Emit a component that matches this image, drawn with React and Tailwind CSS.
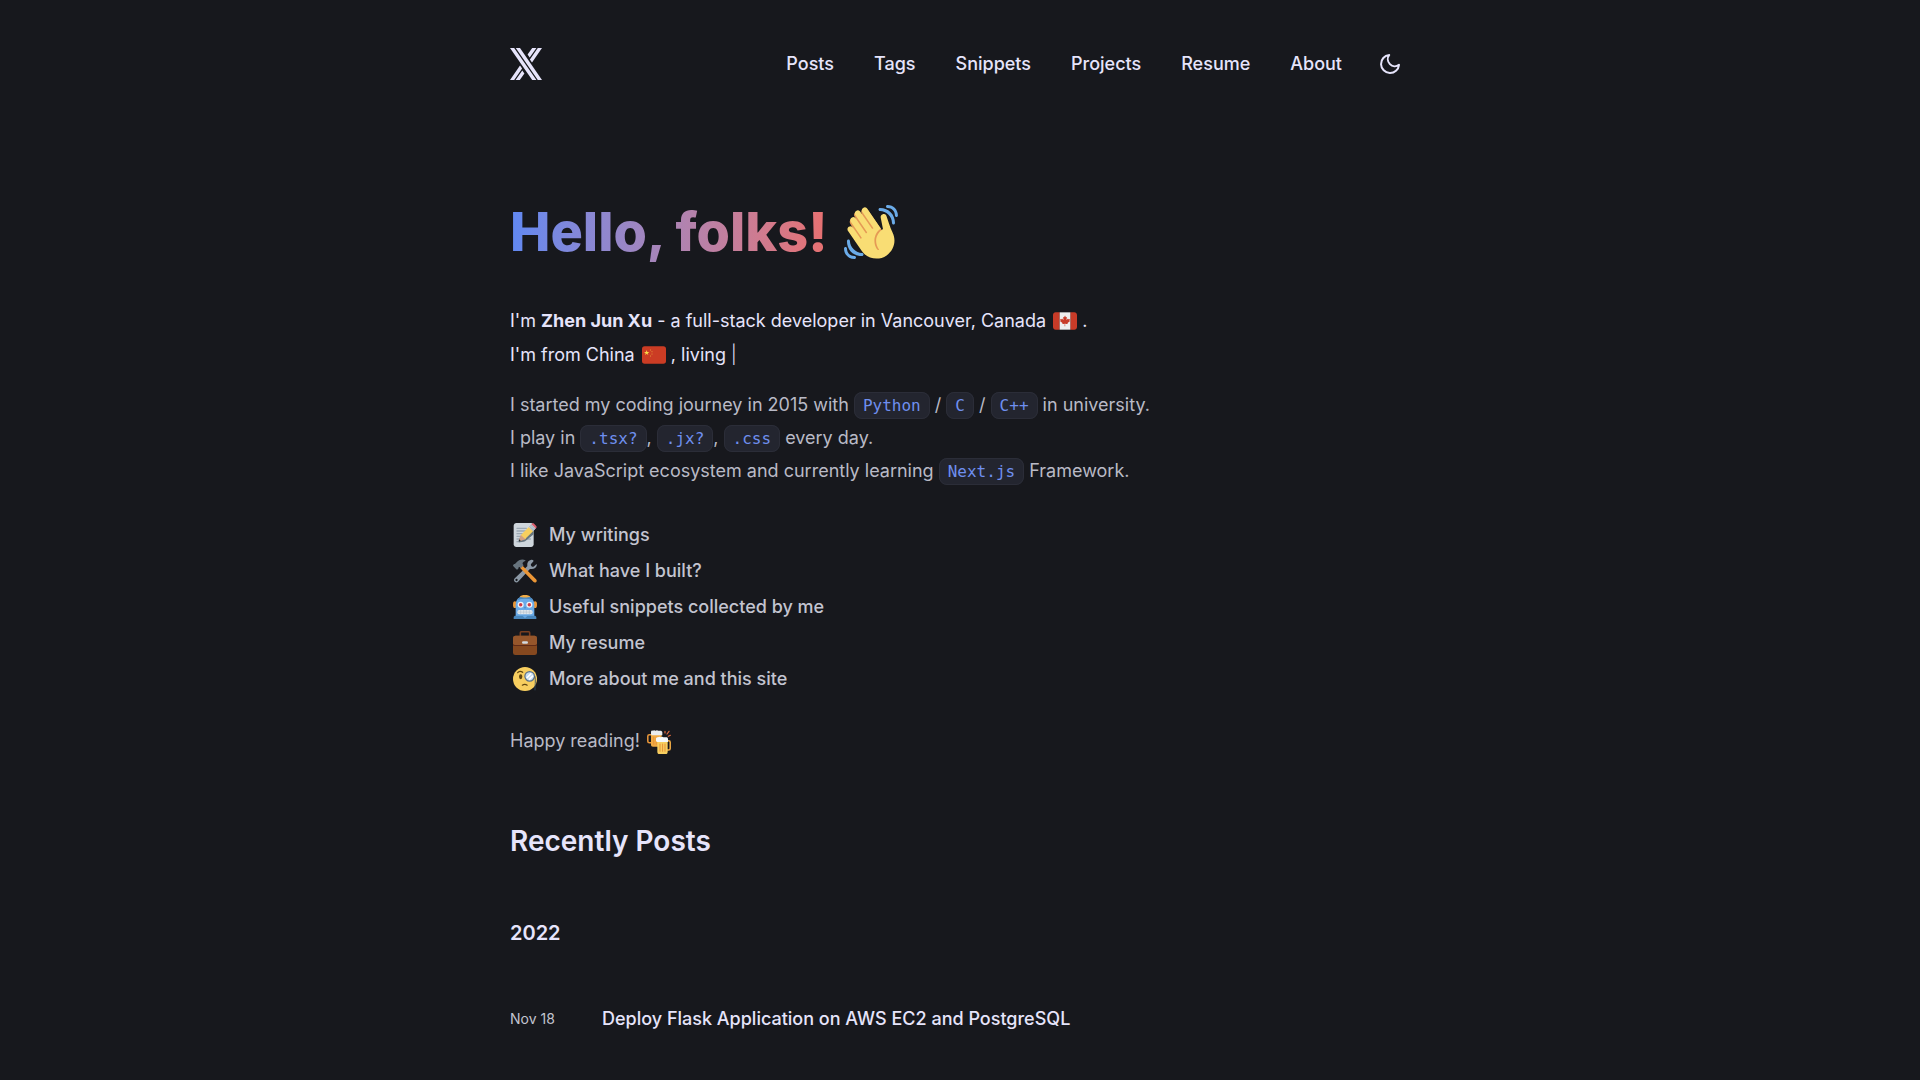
const emojiArt = {
  wave: (
    <>
      <path fill="#E59A55" d="M4.861 9.147c.94-.657 2.357-.531 3.201.166l-.968-1.407c-.779-1.111-.5-2.313.612-3.093 1.112-.777 4.263 1.312 4.263 1.312-.786-1.122-.639-2.544.483-3.331 1.122-.784 2.67-.513 3.456.611l10.292 14.72L25 31l-12.083-4.042L4.25 12.625c-.793-1.129-.519-2.686.611-3.478z" />
      <path fill="#F9DD74" d="M2.695 17.336s-1.132-1.65.519-2.781c1.649-1.131 2.78.518 2.78.518l5.251 7.658c.181-.302.379-.6.6-.894L4.557 11.21s-1.131-1.649.519-2.78c1.649-1.131 2.78.518 2.78.518l6.855 9.997c.255-.208.516-.417.785-.622L7.549 6.732s-1.131-1.649.519-2.78c1.649-1.131 2.78.518 2.78.518l7.947 11.589c.292-.179.581-.334.871-.498L12.238 4.729s-1.131-1.649.518-2.78c1.649-1.131 2.78.518 2.78.518l7.854 11.454 1.194 1.742c-4.948 3.394-5.419 9.779-2.592 13.902.565.825 1.39.26 1.39.26-3.393-4.949-2.357-10.51 2.592-13.903L24.515 8.62s-.545-1.924 1.378-2.47c1.924-.545 2.47 1.379 2.47 1.379l1.685 5.004c.668 1.984 1.379 3.961 2.32 5.831 2.657 5.28 1.07 11.842-3.94 15.279-5.465 3.747-12.936 2.354-16.684-3.11L2.695 17.336z" />
      <g fill="#6BABE8">
        <path d="M12 32.042C8 32.042 3.958 28 3.958 24c0-.553-.405-1-.958-1s-1.042.447-1.042 1C1.958 30 6 34.042 12 34.042c.553 0 1-.489 1-1.042s-.447-.958-1-.958z" />
        <path d="M7 34c-3 0-5-2-5-5 0-.553-.447-1-1-1s-1 .447-1 1c0 4 3 7 7 7 .553 0 1-.447 1-1s-.447-1-1-1zM24 2c-.552 0-1 .448-1 1s.448 1 1 1c4 0 8 3.589 8 8 0 .552.448 1 1 1s1-.448 1-1c0-5.514-4-10-10-10z" />
        <path d="M29 .042c-.552 0-1 .406-1 .958s.448 1.042 1 1.042c3 0 4.958 2.225 4.958 4.958 0 .552.489 1 1.042 1s.958-.448.958-1C35.958 3.163 33 .042 29 .042z" />
      </g>
    </>
  ),
  canada: (
    <>
      <path fill="#C83B28" d="M4 5C1.791 5 0 6.791 0 9v18c0 2.209 1.791 4 4 4h6V5H4zm28 0h-6v26h6c2.209 0 4-1.791 4-4V9c0-2.209-1.791-4-4-4z" />
      <path fill="#EEE" d="M10 5h16v26H10z" />
      <path fill="#C83B28" d="M18.615 22.113c1.198.139 2.272.264 3.469.401l-.305-1.002c-.049-.176.017-.285.126-.371l3.732-3.025-.767-.384c-.307-.153-.223-.291-.112-.702l.565-2.059-2.147.459c-.209.032-.349-.048-.37-.161l-.276-1.005-1.697 1.911c-.241.306-.731.306-.578-.396l.726-3.878-.973.507c-.273.154-.547.181-.7-.094l-1.293-2.457-1.293 2.457c-.154.275-.427.248-.7.094l-.973-.507.726 3.878c.153.702-.337.702-.578.396l-1.697-1.911-.276 1.005c-.021.113-.161.193-.37.161l-2.147-.459.565 2.059c.111.411.195.549-.112.702l-.767.384 3.732 3.025c.109.086.175.195.126.371l-.305 1.002c1.197-.137 2.271-.263 3.469-.401.106 0 .177.06.177.181l-.19 3.76h.95l-.19-3.76c.002-.121.073-.181.179-.181z" />
    </>
  ),
  china: (
    <>
      <rect y="5" width="36" height="26" rx="4" fill="#CB3C24" />
      <path fill="#F8DC49" d="M7 10.5l.95 2.9h3.05l-2.47 1.8.94 2.9L7 16.3l-2.47 1.8.94-2.9L3 13.4h3.05z" />
      <g fill="#F8DC49">
        <circle cx="12.6" cy="10.6" r=".7" />
        <circle cx="15" cy="13" r=".7" />
        <circle cx="15" cy="16.6" r=".7" />
        <circle cx="12.6" cy="19.4" r=".7" />
      </g>
    </>
  ),
  memo: (
    <>
      <path fill="#CFD6DC" d="M31 32c0 2.209-1.791 4-4 4H5c-2.209 0-4-1.791-4-4V4c0-2.209 1.791-4 4-4h22c2.209 0 4 1.791 4 4v28z" />
      <path stroke="#9DA9B4" strokeWidth="2" strokeLinecap="round" d="M6 8h14M6 12h14M6 16h14M6 20h20M6 24h20M6 28h6" />
      <path fill="#66757F" d="M31 6.272c-.827-.535-1.837-.579-2.521-.023l-.792.646-1.484 1.211-.1.08-2.376 1.938-11.878 9.686c-.437.357-.793 1.219-1.173 2.074-.378.85-.969 2.852-1.443 4.391-.148.25-1.065 1.846-.551 2.453.52.615 2.326.01 2.568-.076 1.626-.174 3.731-.373 4.648-.58.924-.211 1.854-.395 2.291-.752.008-.006.01-.018.017-.023l11.858-9.666.792-.646.144-.118V6.272z" />
      <path fill="#D0A086" d="M18.145 22.526s-1.274-1.881-2.117-2.553c-.672-.843-2.549-2.116-2.549-2.116-.448-.446-1.191-.48-1.629-.043-.437.438-.793 1.366-1.173 2.291-.472 1.146-1.276 4.154-1.768 5.752l2.2 1.2c1.598-.493 4.607-1.296 5.752-1.768.924-.381 1.854-.736 2.291-1.174.439-.435.406-1.178-.043-1.627z" />
      <path fill="#DC5F6E" d="M25.312 4.351c-.876.875-.876 2.293 0 3.168l3.167 3.168c.876.874 2.294.874 3.168 0l3.169-3.168c.874-.875.874-2.293 0-3.168l-3.169-3.168c-.874-.875-2.292-.875-3.168 0l-3.167 3.168z" />
      <path fill="#F7CF5F" d="M11.849 17.815l3.17 3.17 3.165 3.166 11.881-11.879-6.337-6.336-11.879 11.879z" />
      <path fill="#292F33" d="M11.298 26.742s-2.06 1.133-2.616.576c-.557-.558.581-2.611.581-2.611s1.951.036 2.035 2.035z" />
      <path fill="#CCD6DD" d="M23.728 5.935l3.96-3.96 6.336 6.337-3.96 3.96z" />
      <path fill="#99AAB5" d="M26.103 3.558l.792-.792 6.336 6.335-.792.792zm-1.583 1.585l.791-.792 6.335 6.335-.791.792z" />
    </>
  ),
  tools: (
    <>
      <path fill="#8C99A6" fillRule="evenodd" d="M27.5 1.2c-3.9.7-6.6 4-6.1 7.8.1.8.2 1.4 0 1.8L2.7 28.8c-1.6 1.6-1.6 3.9 0 5.3 1.5 1.5 3.9 1.4 5.3-.2L25 15.3c.6-.6 1.5-.4 2.5-.3 4 .4 7.5-2.2 8.3-6.1.2-1.2-.6-1.5-1.3-.8l-3.3 3.1c-1 .9-2.3.7-3.4-.3-1.2-1.1-1.4-2.5-.4-3.6l3-3.4c.9-1.1.5-2.9-2.9-2.7zM5.3 29.8a1.7 1.7 0 1 1 0 3.4 1.7 1.7 0 0 1 0-3.4z" />
      <path fill="#EB9636" d="M13.7 9.5l20.9 20.7c1.3 1.3 1.4 3 .2 4.2-1.2 1.2-3.1 1.1-4.3-.2L10.3 13.2z" />
      <path fill="#67747E" d="M18.6 1.7C14.2-.2 9.6.7 6.5 3.8L2.9 7.4c-.5-.2-1.1 0-1.5.4l-.8.8c-.7.7-.7 1.6 0 2.3l4.3 4.3c.7.7 1.6.7 2.3 0l.8-.8c.5-.5.6-1.2.3-1.8.8-.7 1.5-.6 2.2.1l1.1 1.1 4.4-4.4-1-1.2c-1.3-1.5-.8-3.6 3.3-5.2.6-.3.9-1-.1-1.3z" />
    </>
  ),
  robot: (
    <>
      <ellipse cx="2.8" cy="14.5" rx="2.8" ry="5" fill="#EB9636" />
      <ellipse cx="33.2" cy="14.5" rx="2.8" ry="5" fill="#EB9636" />
      <path fill="#6BABE8" d="M4 32V15C4 7 9 1.5 18 1.5S32 7 32 15v17z" />
      <path fill="#4A87BD" d="M6.5 7.5C9 3.5 13 2 18 2s9 1.5 11.5 5.5C22 5 14 5 6.5 7.5zM1 36v-2.5C1 32 2.3 31 4 31h28c1.7 0 3 1 3 2.5V36z" />
      <path fill="#F0AB45" d="M10 2.8C12-.8 24-.8 26 2.8c-4 1.5-12 1.5-16 0z" />
      <circle cx="11.5" cy="14.5" r="4.5" fill="#F1F3F5" />
      <circle cx="24.5" cy="14.5" r="4.5" fill="#F1F3F5" />
      <circle cx="11.5" cy="14.5" r="2.6" fill="#CD3B47" />
      <circle cx="24.5" cy="14.5" r="2.6" fill="#CD3B47" />
      <path fill="#4A87BD" d="M18 17l1.6 3h-3.2z" />
      <rect x="6.5" y="22.5" width="23" height="6.5" rx="3" fill="#E1E8ED" />
      <path stroke="#A9B8C4" strokeWidth=".7" d="M11.5 22.5V29M16 22.5V29M20 22.5V29M24.5 22.5V29M7 25.7h22" />
      <path fill="#6BABE8" d="M14 31h8l-4 3.5z" />
    </>
  ),
  briefcase: (
    <>
      <path fill="none" stroke="#7A3F20" strokeWidth="2.4" strokeLinejoin="round" d="M11 8V2.500C11 1.700 11.700 1.200 12.500 1.200h11c.8 0 1.500.5 1.500 1.300V8" />
      <rect y="7" width="36" height="29" rx="3.5" fill="#85481F" />
      <path fill="#96562B" d="M0 11c0-2.200 1.800-4 4-4h28c2.200 0 4 1.800 4 4v7c0 1.700-1.300 3-3 3H3c-1.700 0-3-1.300-3-3z" />
      <path fill="#5F2A17" d="M0 19.500c1 1.200 2 1.500 3 1.500h30c1 0 2-.3 3-1.500v2.300c-1 .8-2 .8-3 .8H3c-1 0-2 0-3-.8z" />
      <rect x="13.5" y="15.2" width="9" height="4" rx="2" fill="#D3DAE0" />
    </>
  ),
  monocle: (
    <>
      <circle cx="18" cy="18" r="18" fill="#F7CE5F" />
      <ellipse cx="11.5" cy="14.5" rx="2.5" ry="3.7" fill="#614711" />
      <path fill="none" stroke="#614711" strokeWidth="1.8" strokeLinecap="round" d="M7 8.500C9 6 12 6 14.500 8M14 27.300c2.300-1.500 5-1.500 7.300 0" />
      <circle cx="25" cy="14" r="7.2" fill="#C3DCF0" stroke="#5B7085" strokeWidth="1.8" />
      <path stroke="#fff" strokeWidth="2.4" d="M20.500 16.500l7-7M24 19l6-6" />
      <path fill="none" stroke="#34495E" strokeWidth="1.3" d="M33 14c1.200 7-.2 14 0 21" />
    </>
  ),
  beers: (
    <>
      <path fill="none" stroke="#E8963A" strokeWidth="2.3" d="M7 7H3.500C2 7 1.200 7.800 1.200 9.300v7.400c0 1.500.8 2.300 2.300 2.300H7" />
      <path fill="#F0AB45" d="M6 6h16v16c0 1.700-1 3-3 3H9c-2 0-3-1.300-3-3z" />
      <path stroke="#E8963A" strokeWidth="1.8" d="M10 10v12M14 10v12" />
      <path fill="#E9ECEE" d="M6 3c0-1.500 1.200-2.500 2.700-2 1-1 3-1 4 0 1.200-1 3.200-1 4.300 0h3C21.500 1 23 2 23 3.500V8H8C7 8 6 7.300 6 6z" />
      <path fill="none" stroke="#F0AB45" strokeWidth="2.3" d="M30 16h2.500c1.500 0 2.300.8 2.300 2.300v9.400c0 1.500-.8 2.300-2.300 2.300H30" />
      <path fill="#F7CE5F" d="M15.500 15H31v17.500c0 2-1 3.500-3 3.500h-9.500c-2 0-3-1.500-3-3.500z" />
      <path stroke="#E8963A" strokeWidth="1.6" strokeLinecap="round" d="M19.500 21v11M23.300 21v11M27 21v11" />
      <path fill="#F5F8FA" d="M13.500 13c0-1.500 1.500-2.500 3-2 1-1 3-1 4 0 1.500-1 3-1 4.200 0H29c1.500 0 2.500 1 2.500 2.500V18h-16c-1.500 0-2-1-2-2.500z" />
      <path stroke="#DD6A40" strokeWidth="1.8" strokeLinecap="round" d="M27 4.500V2M30 6l3-4M32 9.500l3-1.500" />
    </>
  ),
};

function Emoji({ name, label, className }) {
  return (
    <svg viewBox="0 0 36 36" role="img" aria-label={label} className={className}>
      {emojiArt[name]}
    </svg>
  );
}

function Logo() {
  return (
    <svg viewBox="0 0 32 32" className="size-8" fill="currentColor" aria-hidden="true">
      <path d="M0 0h4.200l22.200 32h-4.200zM5.800 0H10l22 32h-4.200z" />
      <path d="M22.200 0h4.200l-6.700 9.600-2.100-3zM27.800 0H32L22 14.600l-2.100-3z" />
      <path d="M9.800 32H5.600l6.700-9.600 2.100 3zM4.200 32H0l10-14.600 2.100 3z" />
    </svg>
  );
}

function Moon() {
  return (
    <svg viewBox="0 0 24 24" className="size-6" fill="none" stroke="currentColor" strokeWidth="2" strokeLinecap="round" strokeLinejoin="round" aria-hidden="true">
      <path d="M21 12.790A9 9 0 1 1 11.210 3 7 7 0 0 0 21 12.790z" />
    </svg>
  );
}

function Code({ children }) {
  return (
    <code className="rounded-lg border border-[#2b2d38] bg-[#23252f] px-2 py-[3px] font-['DejaVu_Sans_Mono',monospace] text-base text-[#6f8fee]">
      {children}
    </code>
  );
}

const navItems = ["Posts", "Tags", "Snippets", "Projects", "Resume", "About"];

const links = [
  { icon: "memo", label: "My writings" },
  { icon: "tools", label: "What have I built?" },
  { icon: "robot", label: "Useful snippets collected by me" },
  { icon: "briefcase", label: "My resume" },
  { icon: "monocle", label: "More about me and this site" },
];

const posts = [{ date: "Nov 18", title: "Deploy Flask Application on AWS EC2 and PostgreSQL" }];

export default function App() {
  return (
    <div className="min-h-screen bg-[#17181d] font-['Inter',sans-serif] text-lg text-[#e6e4fb]">
      <div className="mx-auto max-w-[900px]">
        <header className="flex h-32 items-center justify-between">
          <a href="#home" aria-label="Home">
            <Logo />
          </a>
          <div className="flex items-center gap-6 pr-2">
            <nav className="flex items-center gap-10 pr-3 font-medium">
              {navItems.map((item) => (
                <a key={item} href={`#${item.toLowerCase()}`}>
                  {item}
                </a>
              ))}
            </nav>
            <button type="button" aria-label="Toggle theme">
              <Moon />
            </button>
          </div>
        </header>

        <main className="pt-16">
          <h1 className="flex items-center gap-4 text-[54px] leading-20 font-extrabold">
            <span className="bg-linear-to-r from-[#6088f2] to-[#e87070] bg-clip-text text-transparent">Hello, folks!</span>
            <Emoji name="wave" label="Waving hand" className="size-[54px]" />
          </h1>

          <div className="mt-8 leading-[34px]">
            <p>
              I'm <strong>Zhen Jun Xu</strong> - a full-stack developer in Vancouver, Canada{" "}
              <Emoji name="canada" label="Canada" className="mb-0.5 ml-0.5 inline size-6" /> .
            </p>
            <p>
              I'm from China <Emoji name="china" label="China" className="mb-0.5 ml-0.5 inline size-6" /> , living{" "}
              <span className="font-light">|</span>
            </p>
          </div>

          <p className="mt-4 leading-[33px] text-[#b9bac6]">
            I started my coding journey in 2015 with <Code>Python</Code> / <Code>C</Code> / <Code>C++</Code> in university.
            <br />I play in <Code>.tsx?</Code>, <Code>.jx?</Code>, <Code>.css</Code> every day.
            <br />I like JavaScript ecosystem and currently learning <Code>Next.js</Code> Framework.
          </p>

          <ul className="mt-[30px] font-medium text-[#c3c4d0]">
            {links.map(({ icon, label }) => (
              <li key={icon}>
                <a href={`#${icon}`} className="flex h-9 items-center gap-3 pl-[3px]">
                  <Emoji name={icon} label="" className="size-6" />
                  {label}
                </a>
              </li>
            ))}
          </ul>

          <p className="mt-7 leading-8 text-[#b9bac6]">
            Happy reading! <Emoji name="beers" label="Cheers" className="mx-0.5 inline size-6" />
          </p>

          <h2 className="mt-16 text-[28px] leading-10 font-semibold">Recently Posts</h2>
          <h3 className="mt-14 text-xl leading-8 font-semibold">2022</h3>
          <ul className="mt-14">
            {posts.map(({ date, title }) => (
              <li key={title} className="flex items-center leading-7">
                <time className="w-23 text-sm text-[#c3c4d0]">{date}</time>
                <a href="#post" className="font-medium">
                  {title}
                </a>
              </li>
            ))}
          </ul>
        </main>
      </div>
    </div>
  );
}
